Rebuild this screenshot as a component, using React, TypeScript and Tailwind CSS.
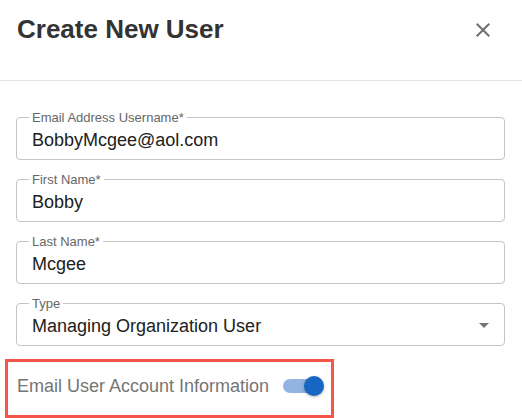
import React from "react";

function Field({ label, value, select }: { label: string; value: string; select?: boolean }) {
  return (
    <div className="relative h-[43px] rounded-[4px] border border-[#c4c4c4] flex items-center pl-[15px] pr-[8px]">
      <span className="absolute left-[12px] top-[-7px] bg-white px-[3px] text-[13px] leading-[13px] text-[#666666]">
        {label}
      </span>
      <span className="flex-1 pt-[2px] text-[18px] leading-[20px] text-[#212121]">{value}</span>
      {select && (
        <svg width="24" height="24" viewBox="0 0 24 24" fill="#757575">
          <path d="M7 10l5 5 5-5z" />
        </svg>
      )}
    </div>
  );
}

export default function App() {
  return (
    <div className="w-[522px] h-[418px] overflow-hidden bg-white font-['Liberation_Sans',Arial,sans-serif]">
      <div className="h-[81px] border-b border-[#e3e3e3] flex items-start justify-between pl-[17px] pr-[27px] pt-[14px]">
        <h1 className="text-[26px] leading-[30px] font-bold text-[#333333]">Create New User</h1>
        <svg className="mt-[4px]" width="24" height="24" viewBox="0 0 24 24" fill="#707070">
          <path d="M19 6.41 17.59 5 12 10.59 6.41 5 5 6.41 10.59 12 5 17.59 6.41 19 12 13.41 17.59 19 19 17.59 13.41 12z" />
        </svg>
      </div>
      <div className="px-[16px] pt-[36px] pr-[17px] flex flex-col gap-[19px]">
        <Field label="Email Address Username*" value="BobbyMcgee@aol.com" />
        <Field label="First Name*" value="Bobby" />
        <Field label="Last Name*" value="Mcgee" />
        <Field label="Type" value="Managing Organization User" select />
      </div>
      <div className="mt-[13px] ml-[5px] w-[329px] h-[59px] border-[3px] border-[#f4574a] flex items-start pl-[9px] pt-[14px]">
        <span className="text-[18px] leading-[20px] text-[#757575]">Email User Account Information</span>
        <div className="relative ml-[14px] w-[41px] h-[20px] flex items-center">
          <div className="w-[34px] h-[14px] rounded-full bg-[#91b4e0]" />
          <div className="absolute right-0 top-0 w-[20px] h-[20px] rounded-full bg-[#1766c2] shadow-[0_1px_3px_rgba(0,0,0,0.3)]" />
        </div>
      </div>
    </div>
  );
}
